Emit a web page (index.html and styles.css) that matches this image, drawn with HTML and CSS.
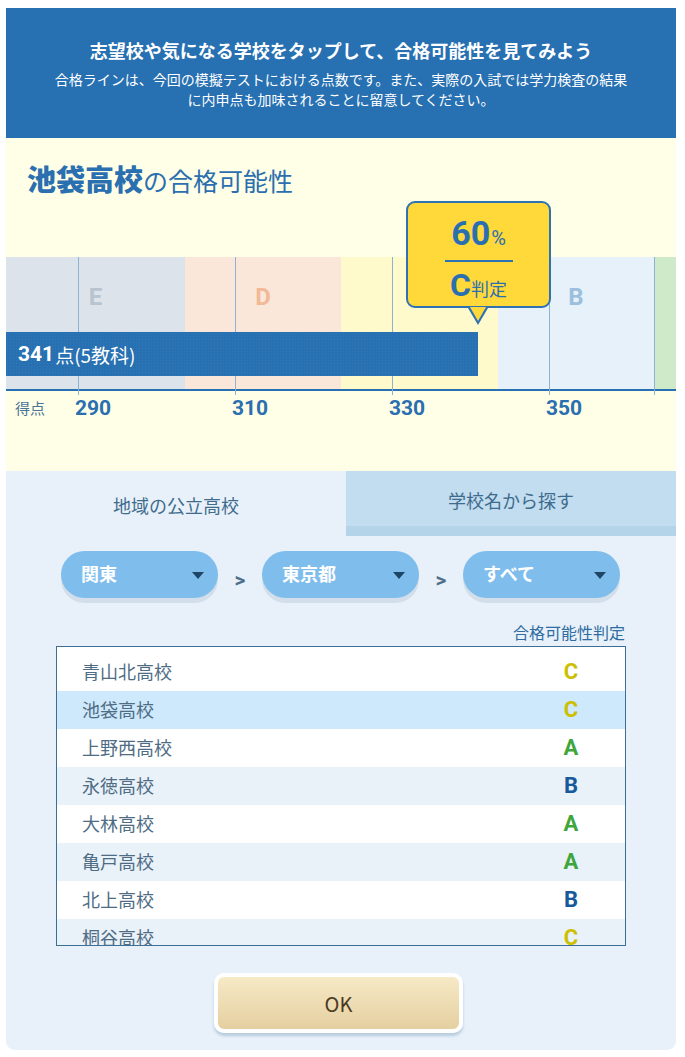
FILE: index.html
```html
<!DOCTYPE html>
<html lang="ja">
<head>
    <meta charset="UTF-8">
    <meta name="viewport" content="width=device-width, initial-scale=1.0">
    <title>合格可能性</title>
    <link rel="stylesheet" href="styles.css">
</head>
<body>
    <div class="panel">
        <header class="intro">
            <h1>志望校や気になる学校をタップして、合格可能性を見てみよう</h1>
            <p>合格ラインは、今回の模擬テストにおける点数です。また、実際の入試では学力検査の結果<br>に内申点も加味されることに留意してください。</p>
        </header>

        <section class="result">
            <h2 class="result-title"><strong>池袋高校</strong>の合格可能性</h2>

            <div class="chart">
                <div class="bands">
                    <div class="band band-e">E</div>
                    <div class="band band-d">D</div>
                    <div class="band band-c">C</div>
                    <div class="band band-b">B</div>
                    <div class="band band-a"></div>
                </div>
                <span class="grid-line" style="left: 72px"></span>
                <span class="grid-line" style="left: 229px"></span>
                <span class="grid-line" style="left: 386px"></span>
                <span class="grid-line" style="left: 543px"></span>
                <span class="grid-line" style="left: 648px"></span>

                <div class="score-bar" style="width: 472px">
                    <b>341</b>点(5教科)
                </div>

                <div class="callout">
                    <div class="callout-rate">60<small>%</small></div>
                    <div class="callout-judge">C<small>判定</small></div>
                </div>

                <div class="axis">
                    <span class="axis-title">得点</span>
                    <span>290</span>
                    <span>310</span>
                    <span>330</span>
                    <span>350</span>
                </div>
            </div>
        </section>

        <div class="tabs">
            <div class="tab active">地域の公立高校</div>
            <div class="tab">学校名から探す</div>
        </div>

        <div class="filters">
            <div class="select">関東</div>
            <span class="sep">&gt;</span>
            <div class="select">東京都</div>
            <span class="sep">&gt;</span>
            <div class="select">すべて</div>
        </div>

        <div class="list-head">合格可能性判定</div>
        <ul class="school-list">
            <li><span>青山北高校</span><span class="grade grade-c">C</span></li>
            <li class="selected"><span>池袋高校</span><span class="grade grade-c">C</span></li>
            <li><span>上野西高校</span><span class="grade grade-a">A</span></li>
            <li><span>永徳高校</span><span class="grade grade-b">B</span></li>
            <li><span>大林高校</span><span class="grade grade-a">A</span></li>
            <li><span>亀戸高校</span><span class="grade grade-a">A</span></li>
            <li><span>北上高校</span><span class="grade grade-b">B</span></li>
            <li><span>桐谷高校</span><span class="grade grade-c">C</span></li>
        </ul>

        <div class="actions">
            <button class="ok-btn" type="button">OK</button>
        </div>
    </div>
</body>
</html>
```

FILE: styles.css
```css
body {
    margin: 0;
    background: #fff;
    font-family: "Noto Sans CJK JP", sans-serif;
}
.panel {
    width: 670px;
    margin: 8px 0 0 6px;
    padding-bottom: 17px;
    background: #e8f1f9;
    border-radius: 0 0 9px 9px;
    overflow: hidden;
}

/* header */
.intro {
    height: 130px;
    box-sizing: border-box;
    padding-top: 30px;
    background: #2770b1;
    color: #fff;
    text-align: center;
}
.intro h1 {
    margin: 0;
    font-size: 18px;
    line-height: 24px;
    font-weight: bold;
}
.intro p {
    margin: 7px 0 0;
    font-size: 14px;
    line-height: 20px;
}

/* result chart */
.result {
    background: #fffee6;
    padding: 22px 0 51px;
}
.result-title {
    height: 36px;
    margin: 0 0 0 21px;
    font-size: 25px;
    line-height: 36px;
    font-weight: normal;
    color: #2a6fb0;
}
.result-title strong {
    font-size: 29px;
    font-weight: 900;
}
.chart {
    position: relative;
    margin-top: 61px;
}
.bands {
    display: flex;
    height: 132px;
}
.band {
    display: flex;
    justify-content: center;
    padding-top: 28px;
    box-sizing: border-box;
    font-family: Roboto, sans-serif;
    font-weight: bold;
    font-size: 24px;
    line-height: 24px;
}
.band-e { width: 179px; background: #dde3ea; color: #b8c4cf; }
.band-d { width: 156px; background: #fbe6da; color: #f1b996; }
.band-c { width: 157px; background: #fffacb; color: #f0e08a; }
.band-b { width: 156px; background: #e6f1f9; color: #9bbfdd; }
.band-a { width: 22px; background: #cfeac8; }
.grid-line {
    position: absolute;
    top: 0;
    width: 1px;
    height: 138px;
    background: #8fb2d1;
}
.score-bar {
    position: absolute;
    top: 75px;
    left: 0;
    height: 44px;
    box-sizing: border-box;
    padding-left: 12px;
    display: flex;
    align-items: center;
    background-color: #2770b1;
    background-image: radial-gradient(rgba(255, 255, 255, 0.06) 1px, transparent 1px);
    background-size: 3px 3px;
    color: #fff;
    font-size: 19px;
}
.score-bar b {
    font-family: Roboto, sans-serif;
    font-size: 21px;
    margin-right: 1px;
}
.callout {
    position: absolute;
    top: -56px;
    left: 400px;
    width: 145px;
    height: 107px;
    box-sizing: border-box;
    padding-top: 10px;
    border: 2px solid #2f72b3;
    border-radius: 9px;
    background: #ffd83a;
    color: #2a6fb0;
    text-align: center;
    font-family: Roboto, sans-serif;
    font-weight: bold;
}
.callout::before,
.callout::after {
    content: "";
    position: absolute;
    left: 60px;
    border-style: solid;
    border-color: transparent;
}
.callout::before {
    bottom: -19px;
    border-width: 17px 10px 0;
    border-top-color: #2f72b3;
}
.callout::after {
    left: 62px;
    bottom: -15px;
    border-width: 14px 8px 0;
    border-top-color: #ffd83a;
}
.callout-rate {
    width: 68px;
    margin: 0 auto;
    font-size: 34px;
    line-height: 40px;
    border-bottom: 2px solid #2f72b3;
    padding-bottom: 2px;
}
.callout-rate small {
    font-size: 20px;
    font-weight: normal;
    margin-left: 1px;
}
.callout-judge {
    margin-top: 3px;
    font-size: 32px;
    line-height: 40px;
}
.callout-judge small {
    font-family: "Noto Sans CJK JP", sans-serif;
    font-size: 18px;
    font-weight: normal;
}
.axis {
    display: grid;
    grid-template-columns: 60px repeat(4, 157px);
    padding: 5px 0 0 9px;
    border-top: 2px solid #2770b1;
    color: #2a6fb0;
    font-family: Roboto, sans-serif;
    font-weight: bold;
    font-size: 21px;
    line-height: 24px;
}
.axis .axis-title {
    font-family: "Noto Sans CJK JP", sans-serif;
    font-weight: normal;
    font-size: 15px;
    color: #4a7598;
}

/* tabs */
.tabs {
    display: flex;
    height: 65px;
}
.tab {
    flex: 1;
    display: flex;
    align-items: center;
    justify-content: center;
    padding-top: 3px;
    box-sizing: border-box;
    font-size: 18px;
    color: #3f6b8d;
    background: #c1ddef;
    border-bottom: 10px solid #b3d4e9;
}
.tab.active {
    flex: 0 0 340px;
    background: transparent;
    border-bottom: none;
}

/* filters */
.filters {
    display: flex;
    align-items: flex-start;
    margin-top: 15px;
    padding-left: 55px;
}
.select {
    position: relative;
    width: 157px;
    height: 47px;
    box-sizing: border-box;
    padding-left: 20px;
    border-radius: 24px;
    background: #7fbdec;
    box-shadow: 0 5px 0 #d2dee9;
    color: #fff;
    font-size: 18px;
    font-weight: bold;
    line-height: 45px;
}
.select::after {
    content: "";
    position: absolute;
    right: 14px;
    top: 21px;
    border-style: solid;
    border-width: 7px 6px 0;
    border-color: #1d4566 transparent transparent;
}
.sep {
    width: 44px;
    padding-top: 17px;
    text-align: center;
    font-family: Roboto, sans-serif;
    font-weight: bold;
    font-size: 21px;
    line-height: 24px;
    color: #4d6f8a;
}

/* list */
.list-head {
    margin: 24px 51px 4px 0;
    text-align: right;
    font-size: 16px;
    line-height: 20px;
    color: #2e6ca3;
}
.school-list {
    list-style: none;
    margin: 0 50px;
    padding: 6px 0 0;
    height: 300px;
    box-sizing: border-box;
    border: 1px solid #3d6f96;
    background: #fff;
    overflow: hidden;
}
.school-list li {
    display: grid;
    grid-template-columns: 1fr 40px;
    align-items: center;
    height: 38px;
    padding: 0 34px 2px 25px;
    box-sizing: border-box;
    font-size: 18px;
    color: #4e6c84;
}
.school-list li:nth-child(even) {
    background: #e9f1f9;
}
.school-list li.selected {
    background: #cde9fb;
}
.grade {
    text-align: center;
    font-family: Roboto, sans-serif;
    font-weight: bold;
    font-size: 22px;
}
.grade-a { color: #3ea63a; }
.grade-b { color: #17599b; }
.grade-c { color: #ccbf00; }

/* ok */
.actions {
    display: flex;
    justify-content: center;
    margin-top: 27px;
    padding-right: 5px;
}
.ok-btn {
    width: 249px;
    height: 60px;
    border: 4px solid #fff;
    border-radius: 10px;
    background: linear-gradient(#f6e9c6, #e5cfa1);
    box-shadow: 0 3px 3px rgba(110, 150, 180, 0.4);
    color: #4b3b1e;
    font-family: "Noto Sans CJK JP", sans-serif;
    font-size: 20px;
    cursor: pointer;
}
```
